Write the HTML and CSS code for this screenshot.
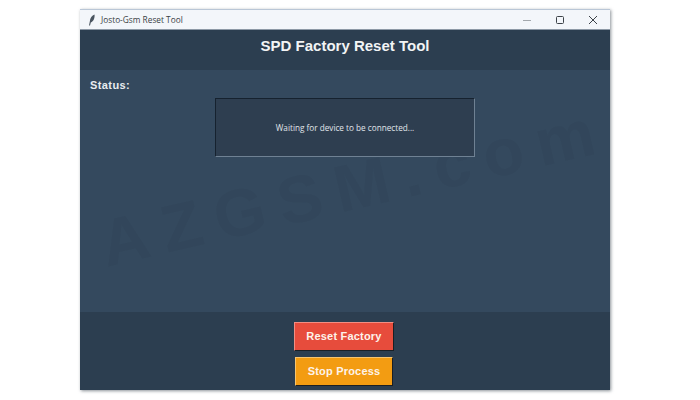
FILE: index.html
```html
<!DOCTYPE html>
<html lang="en">
<head>
    <meta charset="UTF-8">
    <title>Josto-Gsm Reset Tool</title>
    <link rel="stylesheet" href="styles.css">
</head>
<body>
    <div class="window">
        <div class="titlebar">
            <svg class="app-icon" width="10" height="12" viewBox="0 0 10 12">
                <path d="M7.5 0.5C5 1.5 3 4 2.8 7.5L2 11.5L3 11.5L3.8 8.5C6.5 7.5 8 4 7.5 0.5Z" fill="#4a5560"/>
            </svg>
            <span class="window-title">Josto-Gsm Reset Tool</span>
            <div class="window-controls">
                <svg width="10" height="10" viewBox="0 0 10 10"><path d="M1 5.5H9" stroke="#a3a8ad" stroke-width="1"/></svg>
                <svg width="10" height="10" viewBox="0 0 10 10"><rect x="1.5" y="1.5" width="7" height="7" rx="1" fill="none" stroke="#3c4248" stroke-width="1"/></svg>
                <svg width="10" height="10" viewBox="0 0 10 10"><path d="M1 1L9 9M9 1L1 9" stroke="#3c4248" stroke-width="1"/></svg>
            </div>
        </div>

        <header class="app-header">
            <h1>SPD Factory Reset Tool</h1>
        </header>

        <main class="content">
            <span class="watermark">AZGSM.com</span>
            <p class="status-label">Status:</p>
            <div class="status-box">Waiting for device to be connected...</div>
        </main>

        <footer class="actions">
            <button class="reset">Reset Factory</button>
            <button class="stop">Stop Process</button>
        </footer>
    </div>
</body>
</html>
```

FILE: styles.css
```css
body {
    margin: 0;
    width: 700px;
    height: 400px;
    background-color: #fff;
    font-family: "Liberation Sans", Arial, sans-serif;
    overflow: hidden;
}

.window {
    display: flex;
    flex-direction: column;
    width: 530px;
    height: 381px;
    margin: 9px 0 0 80px;
    box-shadow: 1px 1px 3px rgba(60, 70, 80, 0.6);
    border-top: 1px solid #b9c6d6;
    box-sizing: border-box;
}

.titlebar {
    display: flex;
    align-items: center;
    height: 19px;
    padding-left: 7px;
    background-color: #f3f6fa;
    border-bottom: 1px solid #8d99a6;
}

.app-icon {
    margin-right: 4px;
}

.window-title {
    font-family: "Open Sans", sans-serif;
    font-size: 8.3px;
    color: #3a3f45;
    margin-bottom: 1px;
}

.window-controls {
    display: flex;
    gap: 23px;
    margin-left: auto;
    margin-right: 12px;
}

.app-header {
    display: flex;
    justify-content: center;
    align-items: center;
    height: 40px;
    background-color: #2c3e50;
}

.app-header h1 {
    margin: 0 0 9px;
    font-size: 15px;
    color: #f2f4f5;
}

.content {
    position: relative;
    flex: 1;
    padding: 9px 10px 0;
    background-color: #34495e;
    overflow: hidden;
}

.watermark {
    position: absolute;
    left: 15px;
    top: 78px;
    font-size: 66px;
    font-weight: bold;
    letter-spacing: 14px;
    white-space: nowrap;
    color: rgba(30, 35, 45, 0.06);
    transform: rotate(-13deg);
}

.status-label {
    position: relative;
    margin: 0 0 6px;
    font-size: 11px;
    line-height: 13px;
    font-weight: bold;
    letter-spacing: 0.4px;
    color: #e8ecef;
}

.status-box {
    position: relative;
    display: flex;
    justify-content: center;
    align-items: center;
    box-sizing: border-box;
    width: 260px;
    height: 59px;
    margin-left: 125px;
    padding-bottom: 1px;
    background-color: #2e3e50;
    border: 1px solid;
    border-color: #16222f #6f8193 #6f8193 #16222f;
    font-family: "Open Sans", sans-serif;
    font-size: 8.2px;
    color: #e0e5ea;
}

.actions {
    display: flex;
    flex-direction: column;
    align-items: center;
    height: 78px;
    padding: 10px 2px 0 0;
    box-sizing: border-box;
    background-color: #2c3e50;
}

button {
    box-sizing: border-box;
    border: 1px solid;
    font-family: "Liberation Sans", Arial, sans-serif;
    font-size: 11px;
    font-weight: bold;
    letter-spacing: 0.2px;
    color: #fdf3ea;
    padding: 0 0 1px;
}

.reset {
    width: 100px;
    height: 29px;
    margin-bottom: 6px;
    background-color: #e74c3c;
    border-color: #f28e83 #1b1f24 #1b1f24 #f28e83;
}

.stop {
    width: 98px;
    height: 29px;
    background-color: #f39c12;
    border-color: #f8c56f #1b1f24 #1b1f24 #f8c56f;
}
```
